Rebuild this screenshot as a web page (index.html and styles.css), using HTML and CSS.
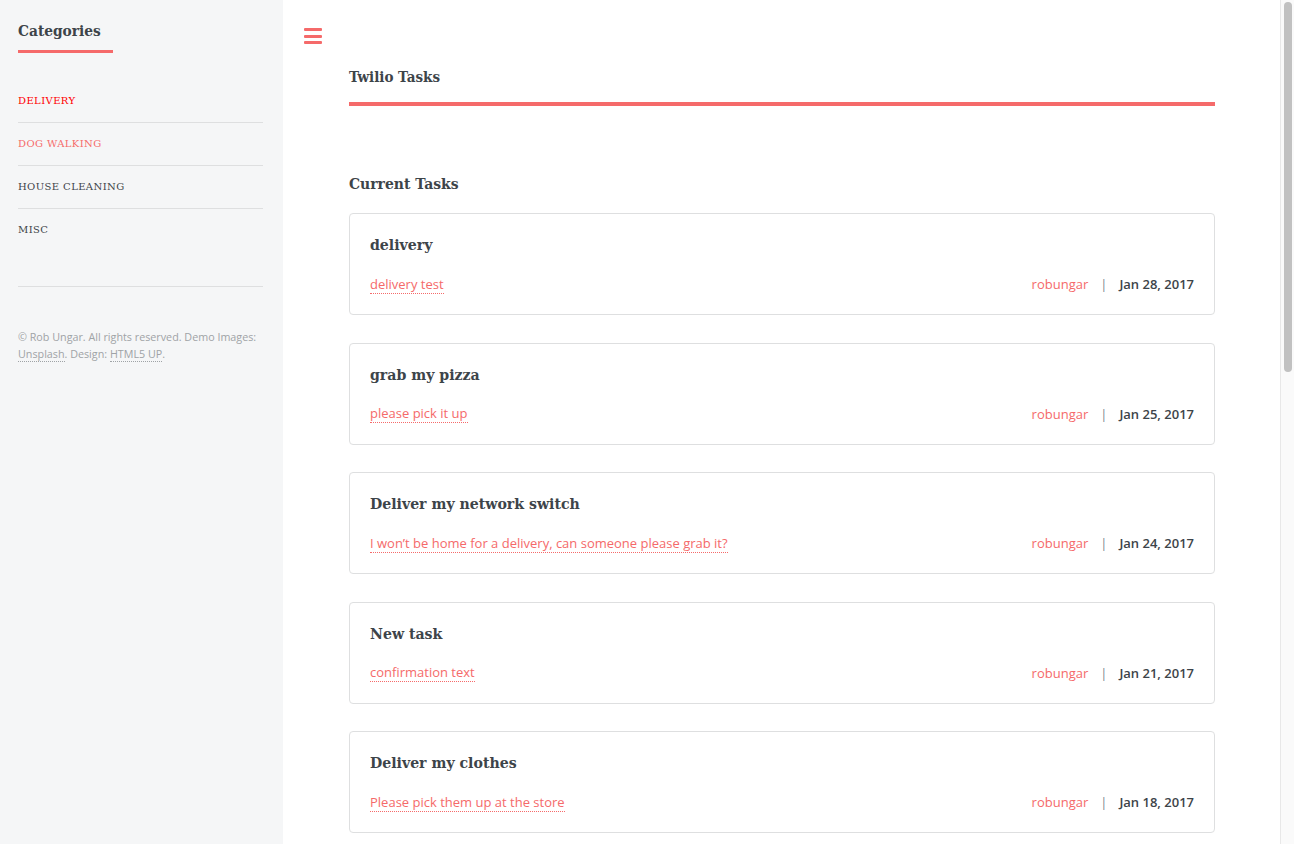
FILE: index.html
```html
<!DOCTYPE html>
<html lang="en">
<head>
<meta charset="utf-8">
<title>Twilio Tasks</title>
<link rel="stylesheet" href="styles.css">
</head>
<body>
<div class="wrapper">
  <aside class="sidebar">
    <header class="side-head">
      <h2 class="side-title">Categories</h2>
    </header>
    <nav class="menu">
      <ul class="menu-list">
        <li class="menu-item"><a class="menu-link is-active" href="#">Delivery</a></li>
        <li class="menu-item"><a class="menu-link is-hover" href="#">Dog Walking</a></li>
        <li class="menu-item"><a class="menu-link" href="#">House Cleaning</a></li>
        <li class="menu-item"><a class="menu-link" href="#">Misc</a></li>
      </ul>
    </nav>
    <footer class="side-foot">
      <p class="copyright">&copy; Rob Ungar. All rights reserved. Demo Images: <a class="foot-link" href="#">Unsplash</a>. Design: <a class="foot-link" href="#">HTML5 UP</a>.</p>
    </footer>
  </aside>

  <main class="main">
    <a class="toggle" href="#" aria-label="Toggle menu">
      <span class="bar"></span><span class="bar"></span><span class="bar"></span>
    </a>
    <div class="inner">
      <header class="page-head">
        <h1 class="logo">Twilio Tasks</h1>
      </header>

      <section class="tasks">
        <h2 class="section-title">Current Tasks</h2>

        <article class="task">
          <h3 class="task-title">delivery</h3>
          <div class="task-row">
            <a class="task-desc" href="#">delivery test</a>
            <div class="task-meta"><a class="task-user" href="#">robungar</a><span class="sep">|</span><span class="task-date">Jan 28, 2017</span></div>
          </div>
        </article>

        <article class="task">
          <h3 class="task-title">grab my pizza</h3>
          <div class="task-row">
            <a class="task-desc" href="#">please pick it up</a>
            <div class="task-meta"><a class="task-user" href="#">robungar</a><span class="sep">|</span><span class="task-date">Jan 25, 2017</span></div>
          </div>
        </article>

        <article class="task">
          <h3 class="task-title">Deliver my network switch</h3>
          <div class="task-row">
            <a class="task-desc" href="#">I won’t be home for a delivery, can someone please grab it?</a>
            <div class="task-meta"><a class="task-user" href="#">robungar</a><span class="sep">|</span><span class="task-date">Jan 24, 2017</span></div>
          </div>
        </article>

        <article class="task">
          <h3 class="task-title">New task</h3>
          <div class="task-row">
            <a class="task-desc" href="#">confirmation text</a>
            <div class="task-meta"><a class="task-user" href="#">robungar</a><span class="sep">|</span><span class="task-date">Jan 21, 2017</span></div>
          </div>
        </article>

        <article class="task">
          <h3 class="task-title">Deliver my clothes</h3>
          <div class="task-row">
            <a class="task-desc" href="#">Please pick them up at the store</a>
            <div class="task-meta"><a class="task-user" href="#">robungar</a><span class="sep">|</span><span class="task-date">Jan 18, 2017</span></div>
          </div>
        </article>
      </section>
    </div>
  </main>
</div>
<div class="scrollbar" aria-hidden="true"><div class="scroll-thumb"></div></div>
</body>
</html>
```

FILE: styles.css
```css
html, body {
  margin: 0;
  padding: 0;
}

body {
  font-family: "Open Sans", "Liberation Sans", sans-serif;
  color: #7f888f;
  background: #ffffff;
  font-size: 13px;
}

a {
  text-decoration: none;
}

.wrapper {
  display: flex;
  min-height: 100vh;
  margin-right: 14px;
}

/* Fake window scrollbar (overlay) */
.scrollbar {
  position: fixed;
  top: 0;
  right: 0;
  bottom: 0;
  width: 13px;
  background: #fafafa;
  border-left: 1px solid #e8e8e8;
}

.scroll-thumb {
  margin: 2px 0 0 3px;
  width: 8px;
  height: 370px;
  border-radius: 4px;
  background: #c1c1c1;
}

/* Sidebar */
.sidebar {
  width: 283px;
  flex: 0 0 283px;
  background: #f5f6f7;
  padding: 0 20px 0 18px;
  box-sizing: border-box;
}

.side-head {
  padding-top: 20px;
}

.side-title {
  display: inline-block;
  margin: 0;
  font-family: "DejaVu Serif Condensed", "DejaVu Serif", serif;
  font-weight: 700;
  font-size: 15.3px;
  line-height: 22px;
  color: #3d4449;
  padding: 0 12px 8px 0;
  border-bottom: 3px solid #f56a6a;
}

.menu-list {
  list-style: none;
  margin: 26px 0 0;
  padding: 0 0 35px;
  border-bottom: 1px solid #dedfe0;
}

.menu-item {
  border-top: 1px solid #dedfe0;
  padding: 14px 0 15px;
}

.menu-item:first-child {
  border-top: 0;
  padding-top: 15px;
}

.menu-link {
  display: block;
  font-family: "DejaVu Serif", serif;
  font-size: 10px;
  line-height: 13px;
  letter-spacing: 0.4px;
  text-transform: uppercase;
  color: #3d4449;
}

.menu-link.is-active {
  color: #ff0000;
}

.menu-link.is-hover {
  color: #f56a6a;
}

.side-foot {
  padding-top: 42px;
}

.copyright {
  margin: 0;
  font-size: 10.75px;
  line-height: 17px;
  color: #9fa3a6;
}

.foot-link {
  color: #9fa3a6;
  border-bottom: 1px dotted #9fa3a6;
}

/* Main */
.main {
  position: relative;
  flex: 1 1 auto;
}

.toggle {
  position: absolute;
  left: 21px;
  top: 28px;
  width: 18px;
  display: flex;
  flex-direction: column;
  gap: 3.5px;
}

.bar {
  display: block;
  height: 3px;
  border-radius: 1px;
  background: #f56a6a;
}

.inner {
  padding: 67px 65px 0 66px;
}

.page-head {
  border-bottom: 4px solid #f56a6a;
  padding-bottom: 15px;
}

.logo {
  margin: 0;
  font-family: "DejaVu Serif Condensed", "DejaVu Serif", serif;
  font-weight: 700;
  font-size: 15px;
  line-height: 20px;
  color: #3d4449;
}

.tasks {
  padding-top: 66px;
}

.section-title {
  margin: 0 0 17px;
  font-family: "DejaVu Serif Condensed", "DejaVu Serif", serif;
  font-weight: 700;
  font-size: 15.5px;
  line-height: 24px;
  color: #3d4449;
}

.task {
  border: 1px solid #dedfe0;
  border-radius: 4px;
  padding: 19px 20px 20px;
  margin-bottom: 27.5px;
}

.task-title {
  margin: 0 0 17px;
  font-family: "DejaVu Serif Condensed", "DejaVu Serif", serif;
  font-weight: 700;
  font-size: 15.7px;
  line-height: 24px;
  color: #3d4449;
}

.task-row {
  display: flex;
  justify-content: space-between;
  align-items: center;
  line-height: 20px;
}

.task-desc {
  color: #f56a6a;
  border-bottom: 1px dotted #f56a6a;
  line-height: 18px;
}

.task-meta {
  display: flex;
  align-items: center;
  gap: 12px;
}

.task-user {
  color: #f56a6a;
}

.sep {
  color: #7f888f;
}

.task-date {
  color: #3d4449;
  font-weight: 600;
}
```
